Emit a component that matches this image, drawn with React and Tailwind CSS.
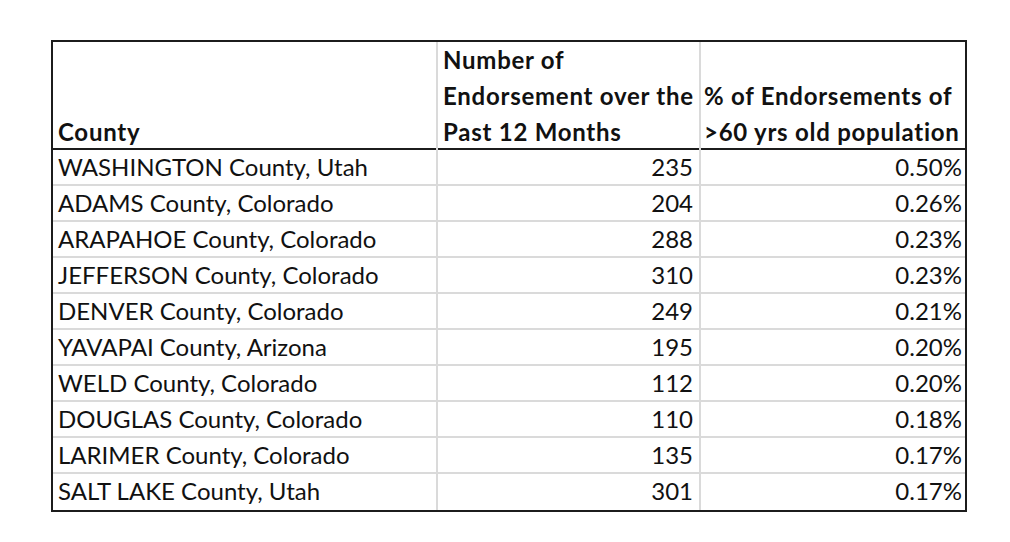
import React from "react";

const rows = [
  ["WASHINGTON County, Utah", "235", "0.50%"],
  ["ADAMS County, Colorado", "204", "0.26%"],
  ["ARAPAHOE County, Colorado", "288", "0.23%"],
  ["JEFFERSON County, Colorado", "310", "0.23%"],
  ["DENVER County, Colorado", "249", "0.21%"],
  ["YAVAPAI County, Arizona", "195", "0.20%"],
  ["WELD County, Colorado", "112", "0.20%"],
  ["DOUGLAS County, Colorado", "110", "0.18%"],
  ["LARIMER County, Colorado", "135", "0.17%"],
  ["SALT LAKE County, Utah", "301", "0.17%"],
];

const App = () => {
  return (
    <div className="w-[1010px] h-[542px] bg-white pt-[40px] pl-[51px] font-['Lato','Liberation_Sans',sans-serif] text-[24px] text-[#111]">
      <div className="w-[916px] border-2 border-[#1c1c1c]">
        <div className="grid grid-cols-[385px_263px_264px] h-[108px] border-b-2 border-[#1c1c1c] font-bold leading-[36px] tracking-[0.75px]">
          <div className="flex items-end px-[5px] border-r-2 border-[#dadada]">County</div>
          <div className="flex items-end px-[5px] border-r-2 border-[#dadada] whitespace-nowrap">
            <span>
              Number of
              <br />
              Endorsement over the
              <br />
              Past 12 Months
            </span>
          </div>
          <div className="flex items-end px-[3px] whitespace-nowrap">
            <span>
              <br />
              % of Endorsements of
              <br />
              &gt;60 yrs old population
            </span>
          </div>
        </div>
        {rows.map((r, i) => (
          <div
            key={r[0]}
            className={
              "grid grid-cols-[385px_263px_264px] h-[36px] items-stretch leading-[34px] " +
              (i < rows.length - 1 ? "border-b-2 border-[#dadada]" : "")
            }
          >
            <div className="px-[5px] border-r-2 border-[#dadada] whitespace-nowrap">{r[0]}</div>
            <div className="px-[6px] text-right border-r-2 border-[#dadada]">{r[1]}</div>
            <div className="px-[3px] text-right">{r[2]}</div>
          </div>
        ))}
      </div>
    </div>
  );
};

export default App;
